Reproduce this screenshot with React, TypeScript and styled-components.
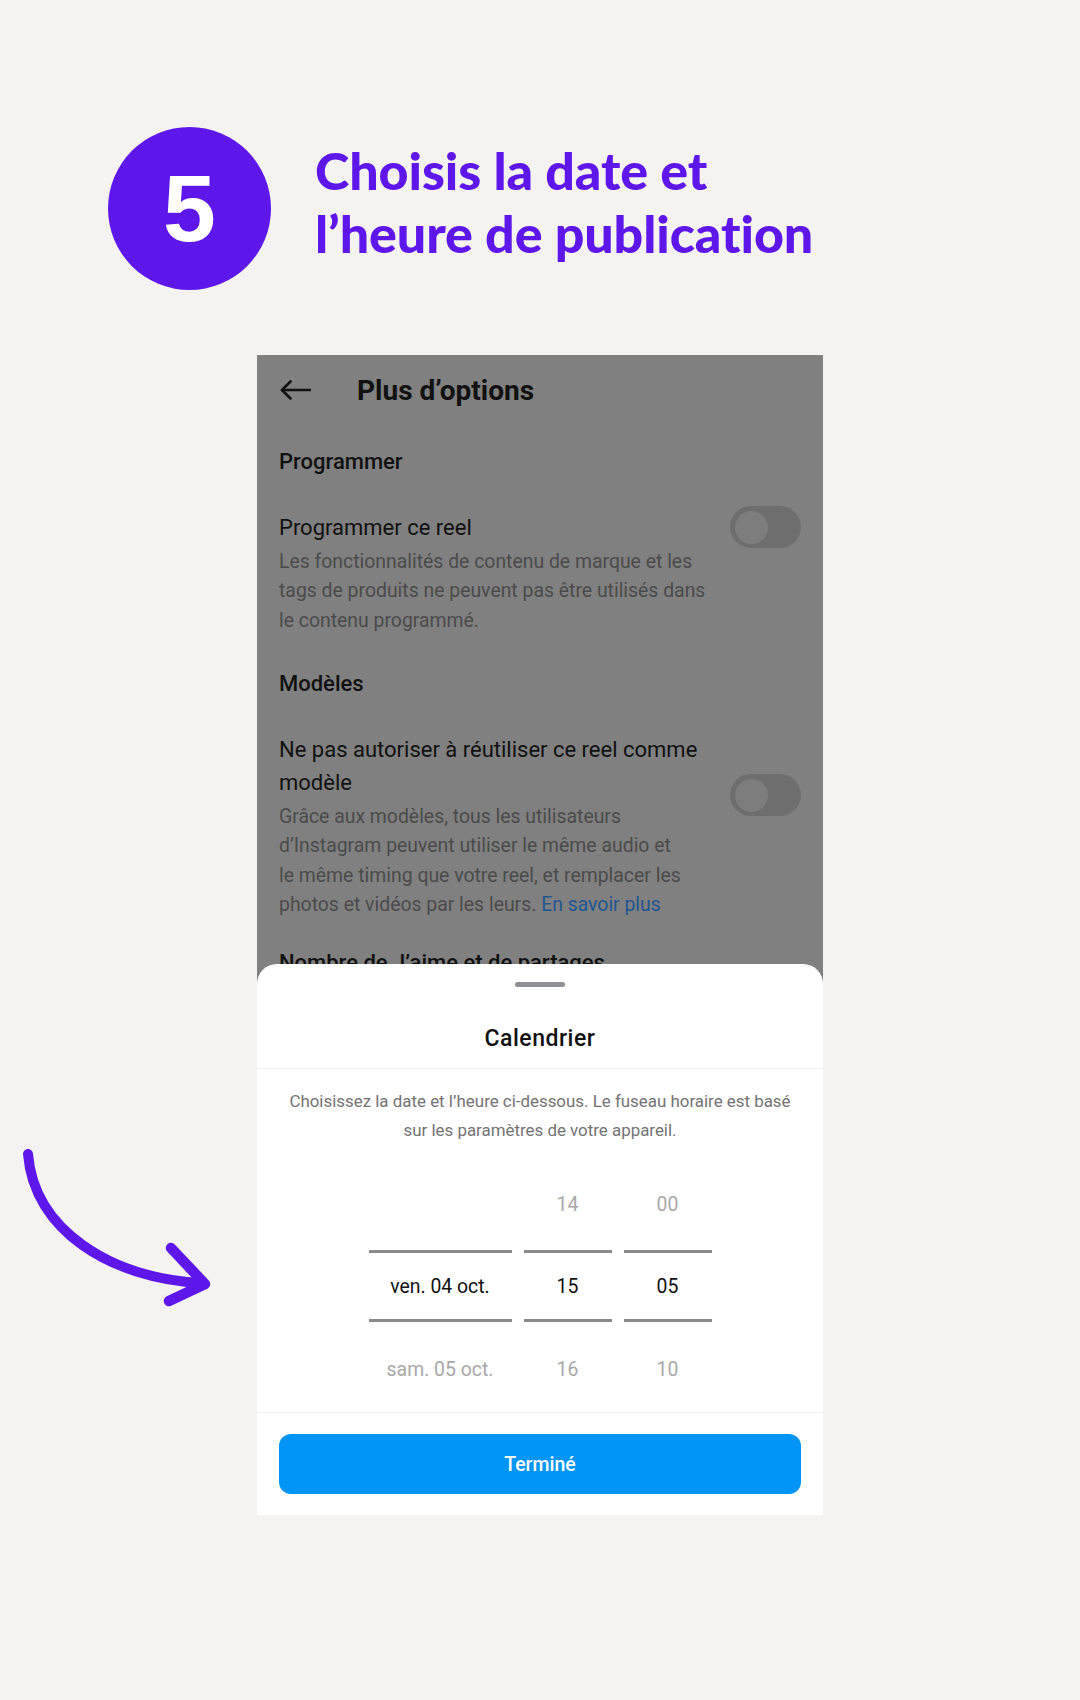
import React from 'react';
import styled, { createGlobalStyle } from 'styled-components';

const GlobalStyle = createGlobalStyle`
  html, body {
    margin: 0;
    padding: 0;
    background: #f4f3f1;
  }
  body {
    font-family: Roboto, 'Noto Sans', sans-serif;
  }
`;

const Page = styled.div`
  width: 1080px;
  min-height: 1700px;
  padding-top: 127px;
  box-sizing: border-box;
  background: #f4f3f1;
`;

const Hero = styled.header`
  display: flex;
  align-items: flex-start;
  gap: 44px;
  padding-left: 108px;
`;

const StepBadge = styled.div`
  width: 163px;
  height: 163px;
  flex-shrink: 0;
  border-radius: 50%;
  background: #5e17eb;
  color: #fff;
  display: flex;
  align-items: center;
  justify-content: center;
  font-family: 'Liberation Sans', Arial, sans-serif;
  font-weight: 700;
  font-size: 95px;
  line-height: 1;
`;

const Headline = styled.h1`
  margin: 12px 0 0;
  font-family: Lato, 'Open Sans', sans-serif;
  font-weight: 900;
  font-size: 52px;
  line-height: 63px;
  letter-spacing: -0.1px;
  color: #5e17eb;
`;

const Stage = styled.div`
  display: flex;
  margin-top: 65px;
`;

const ArrowSlot = styled.div`
  width: 257px;
  flex-shrink: 0;
  padding-top: 775px;

  svg {
    display: block;
  }
`;

const Phone = styled.div`
  width: 566px;
  height: 1160px;
  background: #808080;
  display: flex;
  flex-direction: column;
  overflow: hidden;
`;

const Screen = styled.div`
  height: 609px;
  flex-shrink: 0;
  overflow: hidden;
  padding: 0 22px;
  box-sizing: border-box;
`;

const TopBar = styled.div`
  display: flex;
  align-items: center;
  gap: 46px;
  height: 70px;
  padding-left: 1px;

  svg {
    display: block;
  }
`;

const ScreenTitle = styled.h1`
  margin: 0;
  font-size: 28px;
  font-weight: 700;
  color: #111;
`;

const SectionTitle = styled.h3<{ $gap: number }>`
  margin: ${(p) => p.$gap}px 0 0;
  font-size: 22px;
  line-height: 28px;
  font-weight: 500;
  color: #111;
  white-space: nowrap;
`;

const OptionRow = styled.div`
  display: flex;
  align-items: flex-start;
  justify-content: space-between;
  margin-top: 35px;
`;

const OptionText = styled.div`
  flex: 1;
  min-width: 0;
`;

const OptionLabel = styled.div`
  font-size: 22px;
  line-height: 33px;
  color: #111;
  white-space: nowrap;
`;

const OptionHint = styled.p`
  margin: 2.5px 0 0;
  font-size: 19.4px;
  line-height: 29.5px;
  color: #4b4b4b;
  white-space: nowrap;
`;

const HintLink = styled.span`
  color: #20568f;
`;

const Toggle = styled.div<{ $offset: number }>`
  width: 71px;
  height: 42px;
  flex-shrink: 0;
  margin-top: ${(p) => p.$offset}px;
  border-radius: 21px;
  background: #6e6e6e;
  display: flex;
  align-items: center;
  padding-left: 5px;
  box-sizing: border-box;
`;

const ToggleKnob = styled.div`
  width: 33px;
  height: 33px;
  border-radius: 50%;
  background: #7d7d7d;
`;

const Sheet = styled.div`
  flex: 1;
  background: #fff;
  border-radius: 20px 20px 0 0;
  display: flex;
  flex-direction: column;
`;

const SheetHeader = styled.div`
  display: flex;
  flex-direction: column;
  align-items: center;
  padding: 18px 0 14px;
  border-bottom: 1px solid #efefef;
`;

const Grabber = styled.div`
  width: 50px;
  height: 5px;
  border-radius: 3px;
  background: #8e9096;
`;

const SheetTitle = styled.h2`
  margin: 37px 0 0;
  font-size: 23px;
  line-height: 30px;
  font-weight: 500;
  letter-spacing: 0.5px;
  color: #111;
`;

const SheetNote = styled.p`
  margin: 18px 0 0;
  text-align: center;
  font-size: 16.9px;
  line-height: 29px;
  color: #737373;
  white-space: nowrap;
`;

const Picker = styled.div`
  display: flex;
  justify-content: center;
  gap: 12px;
  margin-top: 17px;
`;

const Wheel = styled.div<{ $width: number }>`
  width: ${(p) => p.$width}px;
  display: flex;
  flex-direction: column;
`;

type Slot = 'above' | 'active' | 'below';

const WheelItem = styled.div<{ $slot: Slot }>`
  height: ${(p) => (p.$slot === 'active' ? 66 : 88)}px;
  box-sizing: ${(p) => (p.$slot === 'active' ? 'content-box' : 'border-box')};
  padding: ${(p) => (p.$slot === 'above' ? '0 0 3px' : p.$slot === 'below' ? '6px 0 0' : '0')};
  display: flex;
  align-items: center;
  justify-content: center;
  font-size: 19.4px;
  color: ${(p) => (p.$slot === 'active' ? '#111' : '#a8a8a8')};
  border-top: ${(p) => (p.$slot === 'active' ? '3px solid #8a8a8a' : 'none')};
  border-bottom: ${(p) => (p.$slot === 'active' ? '3px solid #8a8a8a' : 'none')};
  white-space: nowrap;
`;

const SheetFooter = styled.div`
  border-top: 1px solid #efefef;
  padding: 21px 22px;
  margin-top: auto;
`;

const DoneButton = styled.button`
  display: block;
  width: 100%;
  height: 60px;
  border: none;
  border-radius: 12px;
  background: #0095f6;
  color: #fff;
  font-family: Roboto, sans-serif;
  font-size: 19.5px;
  font-weight: 500;
`;

const BackArrow = () => (
  <svg width="31" height="20" viewBox="0 0 31 20" fill="none" stroke="#111" strokeWidth="2.6" strokeLinecap="round" strokeLinejoin="round">
    <path d="M30 10H2" />
    <path d="M10.5 1.5L2 10l8.5 8.5" />
  </svg>
);

const CurvedArrow = () => (
  <svg width="240" height="200" viewBox="0 0 240 200" fill="none" stroke="#5e17eb" strokeLinecap="round" strokeLinejoin="round">
    <path d="M28 24C34 100 110 148 201 153" strokeWidth="10" />
    <path d="M171 118L205 154L169 171" strokeWidth="10.5" />
  </svg>
);

const slots: Slot[] = ['above', 'active', 'below'];

const wheels = [
  { width: 143, items: ['', 'ven. 04 oct.', 'sam. 05 oct.'] },
  { width: 88, items: ['14', '15', '16'] },
  { width: 88, items: ['00', '05', '10'] },
];

const App = () => (
  <>
    <GlobalStyle />
    <Page>
      <Hero>
        <StepBadge>5</StepBadge>
        <Headline>
          Choisis la date et
          <br />
          l’heure de publication
        </Headline>
      </Hero>

      <Stage>
        <ArrowSlot>
          <CurvedArrow />
        </ArrowSlot>

        <Phone>
          <Screen>
            <TopBar>
              <BackArrow />
              <ScreenTitle>Plus d’options</ScreenTitle>
            </TopBar>

            <SectionTitle $gap={23}>Programmer</SectionTitle>
            <OptionRow>
              <OptionText>
                <OptionLabel>Programmer ce reel</OptionLabel>
                <OptionHint>
                  Les fonctionnalités de contenu de marque et les
                  <br />
                  tags de produits ne peuvent pas être utilisés dans
                  <br />
                  le contenu programmé.
                </OptionHint>
              </OptionText>
              <Toggle $offset={-5}>
                <ToggleKnob />
              </Toggle>
            </OptionRow>

            <SectionTitle $gap={35}>Modèles</SectionTitle>
            <OptionRow>
              <OptionText>
                <OptionLabel>
                  Ne pas autoriser à réutiliser ce reel comme
                  <br />
                  modèle
                </OptionLabel>
                <OptionHint>
                  Grâce aux modèles, tous les utilisateurs
                  <br />
                  d’Instagram peuvent utiliser le même audio et
                  <br />
                  le même timing que votre reel, et remplacer les
                  <br />
                  photos et vidéos par les leurs. <HintLink>En savoir plus</HintLink>
                </OptionHint>
              </OptionText>
              <Toggle $offset={41}>
                <ToggleKnob />
              </Toggle>
            </OptionRow>

            <SectionTitle $gap={29}>Nombre de J’aime et de partages</SectionTitle>
          </Screen>

          <Sheet>
            <SheetHeader>
              <Grabber />
              <SheetTitle>Calendrier</SheetTitle>
            </SheetHeader>
            <SheetNote>
              Choisissez la date et l’heure ci-dessous. Le fuseau horaire est basé
              <br />
              sur les paramètres de votre appareil.
            </SheetNote>

            <Picker>
              {wheels.map((wheel, i) => (
                <Wheel key={i} $width={wheel.width}>
                  {wheel.items.map((item, j) => (
                    <WheelItem key={j} $slot={slots[j]}>
                      {item}
                    </WheelItem>
                  ))}
                </Wheel>
              ))}
            </Picker>

            <SheetFooter>
              <DoneButton>Terminé</DoneButton>
            </SheetFooter>
          </Sheet>
        </Phone>
      </Stage>
    </Page>
  </>
);

export default App;
